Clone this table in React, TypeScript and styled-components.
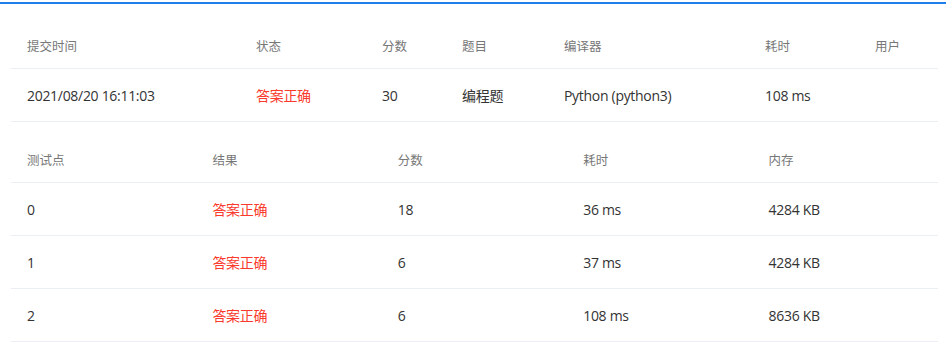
import styled, { createGlobalStyle } from 'styled-components';

const GlobalStyle = createGlobalStyle`
    html, body {
        margin: 0;
        padding: 0;
        background: #fff;
    }
    body {
        font-family: "Open Sans", "Noto Sans CJK SC", sans-serif;
        -webkit-font-smoothing: antialiased;
    }
`

const summaryColumns = '229px 126px 80px 102px 201px 110px 79px';
const caseColumns = 'repeat(5, 1fr)';

const summaryHead = ['提交时间', '状态', '分数', '题目', '编译器', '耗时', '用户'];
const caseHead = ['测试点', '结果', '分数', '耗时', '内存'];

const cases = [
    { id: '0', score: '18', time: '36 ms', mem: '4284 KB' },
    { id: '1', score: '6', time: '37 ms', mem: '4284 KB' },
    { id: '2', score: '6', time: '108 ms', mem: '8636 KB' },
];

function App() {
    return (
        <Page>
            <GlobalStyle />
            <TopBar />
            <Content>
                <Table>
                    <HeadRow $cols={summaryColumns}>
                        {summaryHead.map((h) => <HeadCell key={h}>{h}</HeadCell>)}
                    </HeadRow>
                    <Row $cols={summaryColumns}>
                        <Cell>2021/08/20 16:11:03</Cell>
                        <Cell $accepted>答案正确</Cell>
                        <Cell>30</Cell>
                        <Cell>编程题</Cell>
                        <Cell>Python (python3)</Cell>
                        <Cell>108 ms</Cell>
                        <Cell></Cell>
                    </Row>
                </Table>
                <CaseTable>
                    <HeadRow $cols={caseColumns}>
                        {caseHead.map((h) => <HeadCell key={h}>{h}</HeadCell>)}
                    </HeadRow>
                    {cases.map((c) => (
                        <Row key={c.id} $cols={caseColumns}>
                            <Cell>{c.id}</Cell>
                            <Cell $accepted>答案正确</Cell>
                            <Cell>{c.score}</Cell>
                            <Cell>{c.time}</Cell>
                            <Cell>{c.mem}</Cell>
                        </Row>
                    ))}
                </CaseTable>
            </Content>
        </Page>
    )
}

export default App;

const Page = styled.div`
    width: 946px;
    height: 348px;
    padding-top: 2px;
    box-sizing: border-box;
    background: #fff;
    overflow: hidden;
`

const TopBar = styled.div`
    height: 2px;
    background: #1e7fe8;
`

const Content = styled.div`
    padding: 18px 8px 0 11px;
`

const Table = styled.div`
    display: flex;
    flex-direction: column;
`

const CaseTable = styled(Table)`
    margin-top: 14px;
`

const HeadRow = styled.div<{ $cols: string }>`
    display: grid;
    grid-template-columns: ${(p) => p.$cols};
    height: 46px;
    border-bottom: 1px solid #ebeef5;
`

const Row = styled(HeadRow)`
    height: 52px;
`

const HeadCell = styled.div`
    padding: 0 16px;
    display: flex;
    align-items: center;
    font-size: 12.5px;
    color: #777;
    white-space: nowrap;
`

const Cell = styled.div<{ $accepted?: boolean }>`
    padding: 0 16px;
    display: flex;
    align-items: center;
    font-size: 14px;
    letter-spacing: -0.3px;
    color: ${(p) => (p.$accepted ? '#fa3a2c' : '#333')};
    white-space: nowrap;
`
